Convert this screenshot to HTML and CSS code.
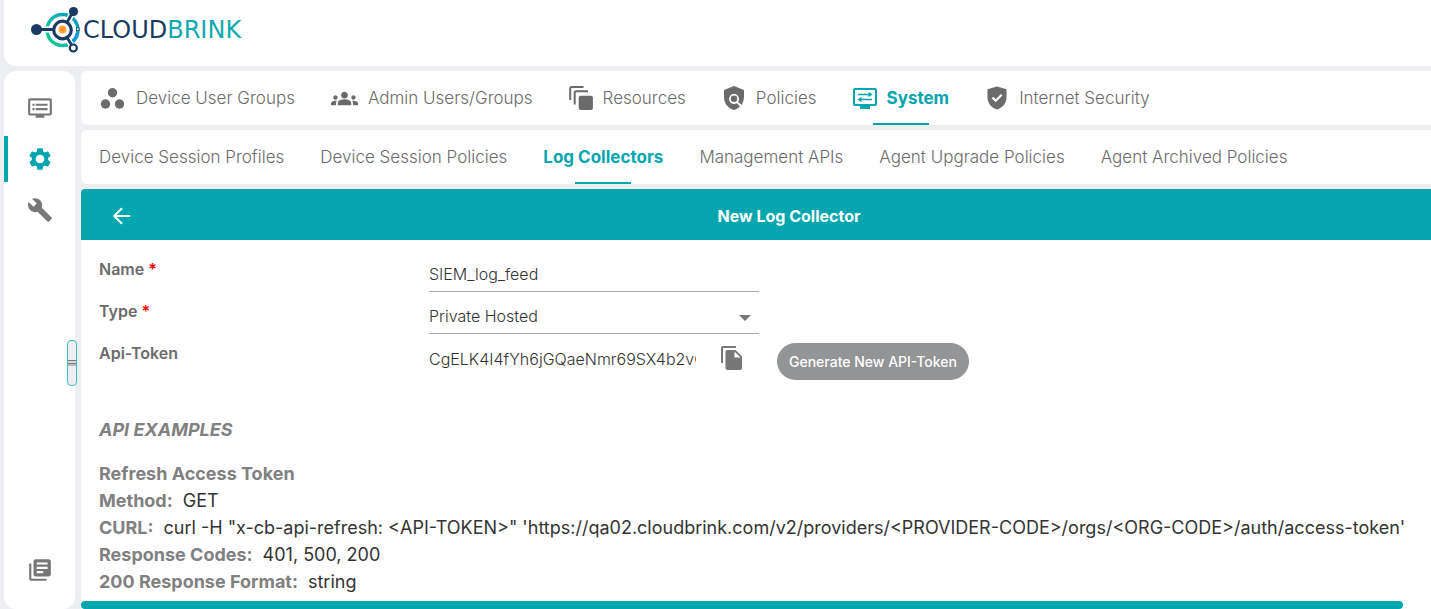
FILE: index.html
```html
<!DOCTYPE html>
<html lang="en">
<head>
<meta charset="utf-8">
<title>Cloudbrink – New Log Collector</title>
<link rel="stylesheet" href="styles.css">
</head>
<body>
<header class="topbar">
  <a class="brand" href="#" aria-label="Cloudbrink">
    <svg class="brand-mark" viewBox="0 0 52 46" aria-hidden="true">
      <defs>
        <linearGradient id="ring" x1="0" y1="1" x2="1" y2="0.4"><stop offset="0" stop-color="#0fcf8c"/><stop offset="0.55" stop-color="#0fb3b0"/><stop offset="1" stop-color="#0b9cb8"/></linearGradient>
        <radialGradient id="core"><stop offset="0" stop-color="#ff8a1c"/><stop offset="1" stop-color="#ffb04a"/></radialGradient>
      </defs>
      <circle cx="31.500" cy="23" r="15.500" fill="none" stroke="url(#ring)" stroke-width="3.400"/>
      <path d="M46.500 26a15.500 15.500 0 0 1-5 8.500" fill="none" stroke="#1597e0" stroke-width="3.400"/>
      <path d="M5 22.500H22M36.500 14.500L42.500 4.500M36 31l5.500 9" stroke="#fff" stroke-width="6"/>
      <circle cx="31.500" cy="23" r="8.800" fill="#fff" stroke="#193b63" stroke-width="3.200"/>
      <circle cx="31.500" cy="22.500" r="4" fill="url(#core)"/>
      <path d="M5 22.500H23M36 15.500L42 4.500M36 30.500l5 8" stroke="#193b63" stroke-width="2.800"/>
      <circle cx="5.500" cy="22.500" r="5.500" fill="#193b63"/>
      <circle cx="42.500" cy="4.600" r="4.600" fill="#193b63"/>
      <circle cx="42.300" cy="41" r="3.500" fill="#fff" stroke="#193b63" stroke-width="2.200"/>
      <rect x="45.500" y="21" width="2.600" height="2.600" fill="#fff" stroke="#193b63" stroke-width=".8"/>
    </svg>
    <span class="brand-name">CLOUD<span class="brand-accent">BRINK</span></span>
  </a>
</header>

<div class="shell">
  <nav class="rail" aria-label="Sections">
    <button class="rail-item" type="button" aria-label="Monitor">
      <svg class="icon" viewBox="0 0 24 24"><path d="M21 3H3c-1.100 0-2 .9-2 2v12c0 1.100.9 2 2 2h5v2h8v-2h5c1.100 0 2-.9 2-2V5c0-1.100-.9-2-2-2zm0 14H3V5h18v12zm-2-9H8v2h11V8zm0 4H8v2h11v-2zM7 8H5v2h2V8zm0 4H5v2h2v-2z"/></svg>
    </button>
    <button class="rail-item rail-active" type="button" aria-label="Configure">
      <svg class="icon" viewBox="0 0 24 24"><path d="M19.43 12.98c.04-.32.07-.64.07-.98s-.03-.66-.07-.98l2.110-1.650c.19-.15.24-.42.12-.64l-2-3.460c-.12-.22-.39-.3-.61-.22l-2.490 1c-.52-.4-1.080-.73-1.690-.98l-.38-2.650C14.460 2.180 14.250 2 14 2h-4c-.25 0-.46.18-.49.42l-.38 2.650c-.61.25-1.170.59-1.690.98l-2.490-1c-.23-.09-.49 0-.61.22l-2 3.460c-.13.22-.07.49.12.64l2.110 1.650c-.04.32-.07.65-.07.98s.03.66.07.98l-2.110 1.650c-.19.15-.24.42-.12.64l2 3.460c.12.22.39.3.61.22l2.490-1c.52.4 1.080.73 1.690.98l.38 2.650c.03.24.24.42.49.42h4c.25 0 .46-.18.49-.42l.38-2.650c.61-.25 1.170-.59 1.690-.98l2.490 1c.23.09.49 0 .61-.22l2-3.460c.12-.22.07-.49-.12-.64l-2.110-1.650zM12 16a4 4 0 1 1 0-8 4 4 0 0 1 0 8z"/></svg>
    </button>
    <button class="rail-item" type="button" aria-label="Tools">
      <svg class="icon" viewBox="0 0 24 24"><path d="M22.700 19l-9.100-9.100c.9-2.300.4-5-1.500-6.900-2-2-5-2.400-7.400-1.300L9 6 6 9 1.600 4.700C.4 7.100.9 10.100 2.900 12.100c1.900 1.900 4.600 2.400 6.900 1.500l9.100 9.100c.4.4 1 .4 1.400 0l2.300-2.300c.5-.4.5-1.100.1-1.400z"/></svg>
    </button>
    <button class="rail-item rail-bottom" type="button" aria-label="Documentation">
      <svg class="icon" viewBox="0 0 24 24"><path d="M4 6H2v14c0 1.100.9 2 2 2h14v-2H4V6zm16-4H8c-1.100 0-2 .9-2 2v12c0 1.100.9 2 2 2h12c1.100 0 2-.9 2-2V4c0-1.100-.9-2-2-2zm-1 9H9V9h10v2zm-4 4H9v-2h6v2zm4-8H9V5h10v2z"/></svg>
    </button>
    <button class="rail-handle" type="button" aria-label="Resize sidebar"></button>
  </nav>

  <main class="content">
    <nav class="tabs" aria-label="Configuration">
      <a class="tab" href="#"><svg class="icon icon-wide" viewBox="0 0 27 24"><circle cx="13.500" cy="6.300" r="4.700"/><circle cx="6.500" cy="17.500" r="4.700"/><circle cx="20.500" cy="17.500" r="4.700"/></svg>Device User Groups</a>
      <a class="tab" href="#"><svg class="icon icon-wide" viewBox="0 0 24 24"><path d="M12 12.750c1.630 0 3.070.39 4.240.9 1.080.48 1.760 1.560 1.760 2.730V18H6v-1.610c0-1.180.68-2.260 1.760-2.730 1.170-.52 2.610-.91 4.240-.91zM4 13c1.100 0 2-.9 2-2s-.9-2-2-2-2 .9-2 2 .9 2 2 2zm1.130 1.100c-.37-.06-.74-.1-1.130-.1-.99 0-1.930.21-2.780.58C.48 14.900 0 15.620 0 16.430V18h4.500v-1.610c0-.83.23-1.610.63-2.290zM20 13c1.100 0 2-.9 2-2s-.9-2-2-2-2 .9-2 2 .9 2 2 2zm4 3.430c0-.81-.48-1.530-1.220-1.850-.85-.37-1.790-.58-2.780-.58-.39 0-.76.04-1.130.1.4.68.63 1.460.63 2.290V18H24v-1.570zM12 6c1.660 0 3 1.340 3 3s-1.340 3-3 3-3-1.340-3-3 1.340-3 3-3z"/></svg>Admin Users/Groups</a>
      <a class="tab" href="#"><svg class="icon" viewBox="0 0 24 24"><path d="M1.200 14V2.500A1.500 1.500 0 0 1 2.700 1H14.500M5.700 18.500V6.800a1.500 1.500 0 0 1 1.500-1.500H19" fill="none" stroke="currentColor" stroke-width="2"/><rect x="9.700" y="9.700" width="14.200" height="14.200" rx="2"/></svg>Resources</a>
      <a class="tab" href="#"><svg class="icon" viewBox="1 0 22 24"><path d="M22 4L12 0 2 4v7c0 6 4 11.600 10 13 2.300-.56 4.500-1.900 6-3.700l-3.240-3.130c-1.940 1.290-4.580 1.070-6.290-.64-1.950-1.950-1.950-5.120 0-7.070 1.950-1.950 5.120-1.950 7.070 0 1.710 1.710 1.920 4.350.64 6.290l3.400 3.300C21.300 15.700 22 13.380 22 11z"/><circle cx="12" cy="12.800" r="3.200"/></svg>Policies</a>
      <a class="tab tab-active" href="#" aria-current="page"><svg class="icon" viewBox="0 0 24 24"><path d="M22 2H2C.9 2 0 2.900 0 4v14c0 1.100.9 2 2 2h5v3h10v-3h5c1.100 0 2-.9 2-2V4c0-1.100-.9-2-2-2zm0 16H2V4h20z"/><path d="M5 8.500h11M8 13.500h11" fill="none" stroke="currentColor" stroke-width="1.600"/><path d="M15.500 5.800L19.500 8.500l-4 2.700zM8.500 10.800l-4 2.700 4 2.700z"/></svg>System</a>
      <a class="tab" href="#"><svg class="icon" viewBox="0 0 24 24"><path d="M12 .5L2.500 3.300v8.200c0 5.800 4.200 10.600 9.500 12 5.300-1.400 9.500-6.200 9.500-12V3.300z"/><path d="M7.500 11.500l3.200 3.200 6-6" fill="none" stroke="#fff" stroke-width="2.200"/></svg>Internet Security</a>
    </nav>
    <nav class="tabs" aria-label="System">
      <a class="tab" href="#">Device Session Profiles</a>
      <a class="tab" href="#">Device Session Policies</a>
      <a class="tab tab-active" href="#" aria-current="page">Log Collectors</a>
      <a class="tab" href="#">Management APIs</a>
      <a class="tab" href="#">Agent Upgrade Policies</a>
      <a class="tab" href="#">Agent Archived Policies</a>
    </nav>

    <section class="panel">
      <div class="panel-head">
        <button class="back" type="button" aria-label="Back"><svg class="icon" viewBox="0 0 24 24"><path d="M21 12H4M12 3.500L3.500 12l8.500 8.500" fill="none" stroke="currentColor" stroke-width="2.200"/></svg></button>
        <h1 class="panel-title">New Log Collector</h1>
      </div>
      <div class="panel-body">
        <form class="form">
          <label class="label" for="name">Name <span class="required">*</span></label>
          <input class="field" id="name" type="text" value="SIEM_log_feed">
          <label class="label" for="type">Type <span class="required">*</span></label>
          <span class="select-box">
            <select class="field" id="type"><option>Private Hosted</option></select>
            <svg class="caret" viewBox="0 0 12 6" aria-hidden="true"><path d="M0 0h12L6 6z"/></svg>
          </span>
          <label class="label" for="token">Api-Token</label>
          <div class="token">
            <input class="field token-field" id="token" type="text" readonly value="CgELK4I4fYh6jGQaeNmr69SX4b2vQ7">
            <button class="copy" type="button" aria-label="Copy token"><svg class="icon" viewBox="0 0 24 24"><path d="M16 0H3C1.900 0 1 .9 1 2v15h2V2h13V0zm-.5 4L22 10.500V22c0 1.100-.9 2-2 2H7.500c-1.100 0-2-.9-2-2V6c0-1.100.9-2 2-2zm-1 7.500h6L14.500 5.500z"/></svg></button>
            <button class="generate" type="button">Generate New API-Token</button>
          </div>
        </form>
        <section class="examples">
          <h2 class="examples-title">API EXAMPLES</h2>
          <h3 class="examples-name">Refresh Access Token</h3>
          <p class="line"><b>Method:</b><span>GET</span></p>
          <p class="line"><b>CURL:</b><span>curl -H "x-cb-api-refresh: &lt;API-TOKEN&gt;" 'https://qa02.cloudbrink.com/v2/providers/&lt;PROVIDER-CODE&gt;/orgs/&lt;ORG-CODE&gt;/auth/access-token'</span></p>
          <p class="line"><b>Response Codes:</b><span>401, 500, 200</span></p>
          <p class="line"><b>200 Response Format:</b><span>string</span></p>
        </section>
      </div>
      <div class="scroll-track"><div class="scroll-thumb"></div></div>
    </section>
  </main>
</div>
</body>
</html>
```

FILE: styles.css
```css
:root {
  --teal: #03a5af;
  --grey: #6b6b6b;
  --page: #edeef2;
}

* { box-sizing: border-box; }

body {
  margin: 0;
  min-height: 100vh;
  display: flex;
  flex-direction: column;
  gap: 5px;
  padding-left: 4px;
  overflow: hidden;
  background: var(--page);
  color: #333;
  font-family: Inter, "Liberation Sans", sans-serif;
  font-size: 16px;
  font-weight: 300;
}

button { border: 0; padding: 0; background: none; color: inherit; font: inherit; cursor: pointer; }
a { color: inherit; text-decoration: none; }
h1, h2, h3, p { margin: 0; }

.icon { display: block; flex: none; width: 24px; height: 24px; fill: currentColor; }
.icon-wide { width: 27px; height: 27px; }

.topbar { padding: 7px 27px 13px; background: #fff; border-radius: 0 0 0 12px; }
.brand { display: inline-flex; align-items: center; vertical-align: top; }
.brand-mark { width: 52px; height: 46px; }
.brand-name { color: #193b63; font-family: "DejaVu Sans", sans-serif; font-size: 24px; font-weight: 400; line-height: 28px; }
.brand-accent { color: #10a9b0; }

.shell { flex: 1; display: flex; gap: 6px; }

.rail {
  position: relative;
  flex: none;
  display: flex;
  flex-direction: column;
  width: 71px;
  padding: 14px 0 16px;
  border-radius: 12px;
  background: #fff;
  color: #777;
}
.rail-item { display: flex; align-items: center; justify-content: center; height: 46px; margin-bottom: 5px; }
.rail-item .icon { width: 26px; height: 26px; }
.rail-active { border-left: 4px solid var(--teal); padding-right: 4px; color: var(--teal); }
.rail-bottom { margin-top: auto; margin-bottom: 0; }
.rail-handle {
  position: absolute;
  right: -2px;
  top: 50%;
  width: 10px;
  height: 46px;
  border: 1px solid #3fbcc3;
  border-radius: 4px;
  background: linear-gradient(#777 0 1px, #ddd 1px 3px, #777 3px 4px, #bbb 4px 6px) center / 100% 6px no-repeat var(--page);
}

.content { flex: 1; min-width: 0; display: flex; flex-direction: column; gap: 5px; }

.tabs { display: flex; gap: 36px; height: 54px; padding-left: 18px; background: #fff; border-radius: 6px 0 0 6px; color: var(--grey); font-size: 17px; white-space: nowrap; }
.tab { position: relative; display: flex; align-items: center; gap: 10px; }
.tab-active { color: var(--teal); font-weight: 700; }
.tab-active::after {
  content: "";
  position: absolute;
  left: 50%;
  bottom: 0;
  width: 56px;
  height: 2px;
  margin-left: -28px;
  background: var(--teal);
}

.panel { flex: 1; display: flex; flex-direction: column; background: #fff; border-top-left-radius: 4px; overflow: hidden; }
.panel-head { display: grid; grid-template-columns: 36px 1fr; align-items: center; height: 51px; padding: 3px 0 0 30px; background: var(--teal); color: #fff; }
.back { justify-self: start; }
.back .icon { width: 22px; height: 22px; }
.panel-title { font-size: 16px; font-weight: 700; line-height: 24px; text-align: center; }
.panel-body { flex: 1; padding: 14px 0 0 18px; }

.form { display: grid; grid-template-columns: 330px 1fr; grid-auto-rows: 42px; }
.label { padding-top: 4px; color: var(--grey); font-weight: 600; line-height: 22px; }
.required { color: #f00; }
.field {
  width: 330px;
  height: 38px;
  padding: 3px 0 0;
  border: 0;
  border-bottom: 1px solid #aaa;
  border-radius: 0;
  background: none;
  color: #333;
  font: inherit;
  appearance: none;
  outline: 0;
}
.select-box { position: relative; width: 330px; }
.caret { position: absolute; right: 8px; top: 19px; width: 12px; height: 6px; fill: #777; }
.token { display: flex; align-items: flex-start; height: 42px; }
.token-field { width: 267px; border-bottom: 0; }
.copy { margin-left: 24px; padding-top: 8px; color: #777; }
.generate { height: 37px; margin-top: 5px; margin-left: 33px; padding: 0 12px; border-radius: 19px; background: #939495; color: #fff; font-size: 14px; font-weight: 500; }

.examples { padding-top: 36px; color: #333; font-size: 18px; line-height: 27px; }
.examples-title { margin-bottom: 17px; color: #808080; font-size: 18px; font-weight: 700; font-style: italic; }
.examples-name { color: #808080; font-size: 18px; font-weight: 700; }
.line { display: flex; gap: 10px; font-weight: 400; white-space: nowrap; }
.line b { color: #808080; font-weight: 700; }

.scroll-track { height: 8px; padding-right: 28px; }
.scroll-thumb { height: 8px; border-radius: 4px; background: var(--teal); }
```
